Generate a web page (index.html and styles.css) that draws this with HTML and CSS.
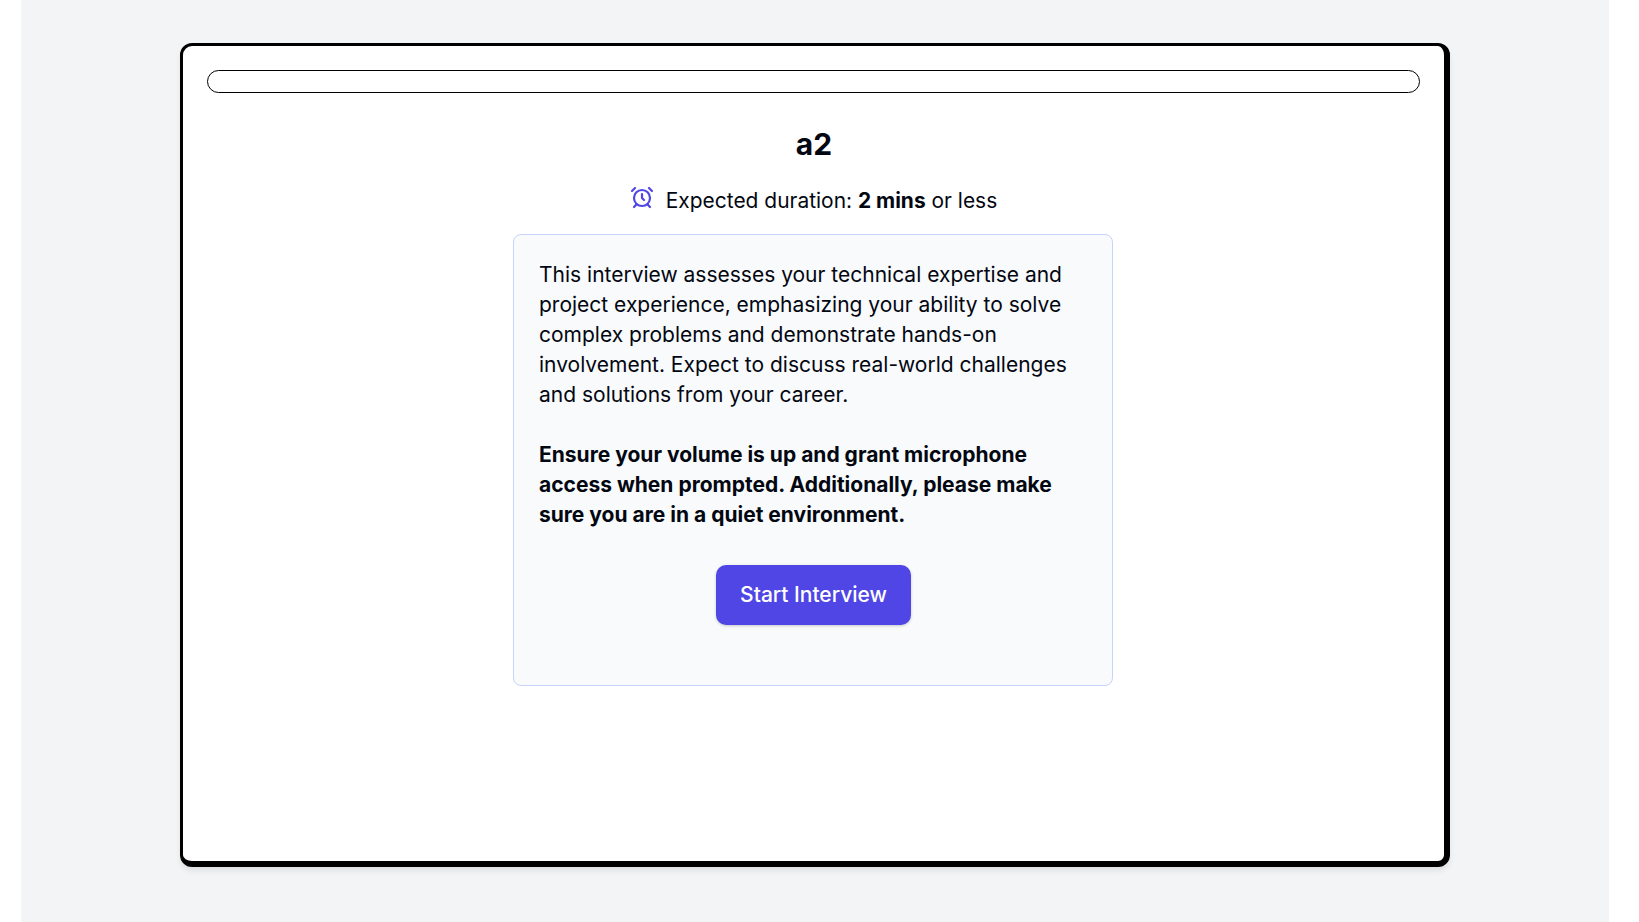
FILE: index.html
```html
<!DOCTYPE html>
<html lang="en">
  <head>
    <meta charset="UTF-8" />
    <meta name="viewport" content="width=device-width, initial-scale=1.0" />
    <title>a2</title>
    <link rel="stylesheet" href="styles.css">
  </head>
  <body>
    <div class="page">
      <div class="card">
        <div class="progress"></div>
        <h1 class="title">a2</h1>
        <p class="duration">
          <svg class="clock" viewBox="0 0 24 24" fill="none" stroke="currentColor" stroke-width="2.2" stroke-linecap="round" stroke-linejoin="round">
            <circle cx="12" cy="13" r="8"></circle>
            <path d="M12 9v4l2 2"></path>
            <path d="M5 3 2 6"></path>
            <path d="m22 6-3-3"></path>
            <path d="M6.4 19.4 4 22"></path>
            <path d="M17.6 19.4 20 22"></path>
          </svg>
          <span>Expected duration: <strong>2 mins</strong> or less</span>
        </p>
        <div class="info">
          <p>This interview assesses your technical expertise and project experience, emphasizing your ability to solve complex problems and demonstrate hands-on involvement. Expect to discuss real-world challenges and solutions from your career.</p>
          <p class="notice">Ensure your volume is up and grant microphone access when prompted. Additionally, please make sure you are in a quiet environment.</p>
          <div class="text-center">
            <button class="btn" type="button">Start Interview</button>
          </div>
        </div>
      </div>
    </div>
  </body>
</html>
```

FILE: styles.css
```css
*, *:before, *:after {
  box-sizing: border-box;
}
html, body {
  margin: 0;
  height: 100%;
}
body {
  background-color: #fff;
  color: #030712;
  font-family: Inter, "Liberation Sans", sans-serif;
}
.page {
  margin: 0 30px 0 21px;
  height: 922px;
  padding: 43px 159px 0;
  background-color: #f3f4f6;
}
.card {
  height: 824px;
  padding: 24px 24px 0;
  background-color: #fff;
  border: solid #000;
  border-width: 3px 6px 6px 3px;
  border-radius: 12px;
  box-shadow: 0 4px 6px -1px rgba(0, 0, 0, .1);
}
.progress {
  height: 23px;
  border: 1px solid #000;
  border-radius: 12px;
}
.title {
  margin: 33px 0 0;
  padding-left: 1px;
  font-size: 30px;
  line-height: 36px;
  font-weight: 700;
  text-align: center;
}
.duration {
  display: flex;
  justify-content: center;
  align-items: center;
  margin: 24px 0 0;
  font-size: 20.95px;
  line-height: 30px;
}
.clock {
  width: 24px;
  height: 24px;
  margin: -8px 12px 0 0;
  color: #4f46e5;
}
.info {
  width: 600px;
  height: 452px;
  margin: 18px 0 0 306px;
  padding: 25px 25px 0;
  background-color: #f9fafb;
  border: 1px solid #c7d2fe;
  border-radius: 8px;
  font-size: 21px;
  line-height: 30px;
}
.info p {
  margin: 0 0 30px;
}
.notice {
  font-weight: 700;
}
.text-center {
  text-align: center;
}
.btn {
  width: 195px;
  height: 60px;
  margin-top: 5px;
  padding: 0 0 1px 1px;
  color: #fff;
  background-color: #4f46e5;
  border: 0;
  border-radius: 10px;
  box-shadow: 0 1px 3px rgba(0, 0, 0, .2);
  font-family: inherit;
  font-size: 21px;
  font-weight: 500;
  cursor: pointer;
}
```
